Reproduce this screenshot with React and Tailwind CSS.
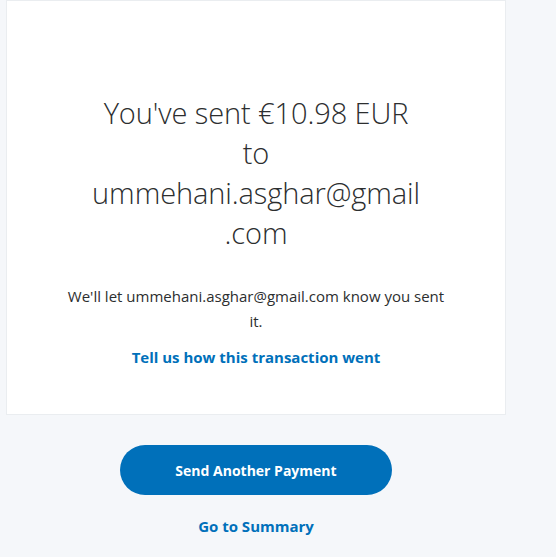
export default function App() {
  return (
    <div className="min-h-screen bg-[#f5f7fa] pl-[6px] font-['Open_Sans',sans-serif]">
      <div className="w-[500px]">
        <section className="bg-white border border-[#eaedf0] h-[415px] pt-[92px] flex flex-col items-center text-center">
          <h1 className="text-[29px] leading-[40px] font-light text-[#2c2e2f] tracking-[-0.1px]">
            You've sent €10.98 EUR
            <br />
            to
            <br />
            ummehani.asghar@gmail
            <br />
            .com
          </h1>
          <p className="mt-[31px] text-[15px] leading-[25px] text-[#2c2e2f] w-[420px]">
            We'll let ummehani.asghar@gmail.com know you sent
            <br />
            it.
          </p>
          <a href="#" className="mt-[11px] text-[15px] leading-[25px] font-bold text-[#0070ba]">
            Tell us how this transaction went
          </a>
        </section>

        <div className="flex flex-col items-center pt-[30px]">
          <button className="w-[272px] h-[50px] rounded-full bg-[#0070ba] text-white text-[14px] font-bold">
            Send Another Payment
          </button>
          <a href="#" className="mt-[20px] text-[15px] leading-[22px] font-bold text-[#0070ba]">
            Go to Summary
          </a>
        </div>
      </div>
    </div>
  );
}
